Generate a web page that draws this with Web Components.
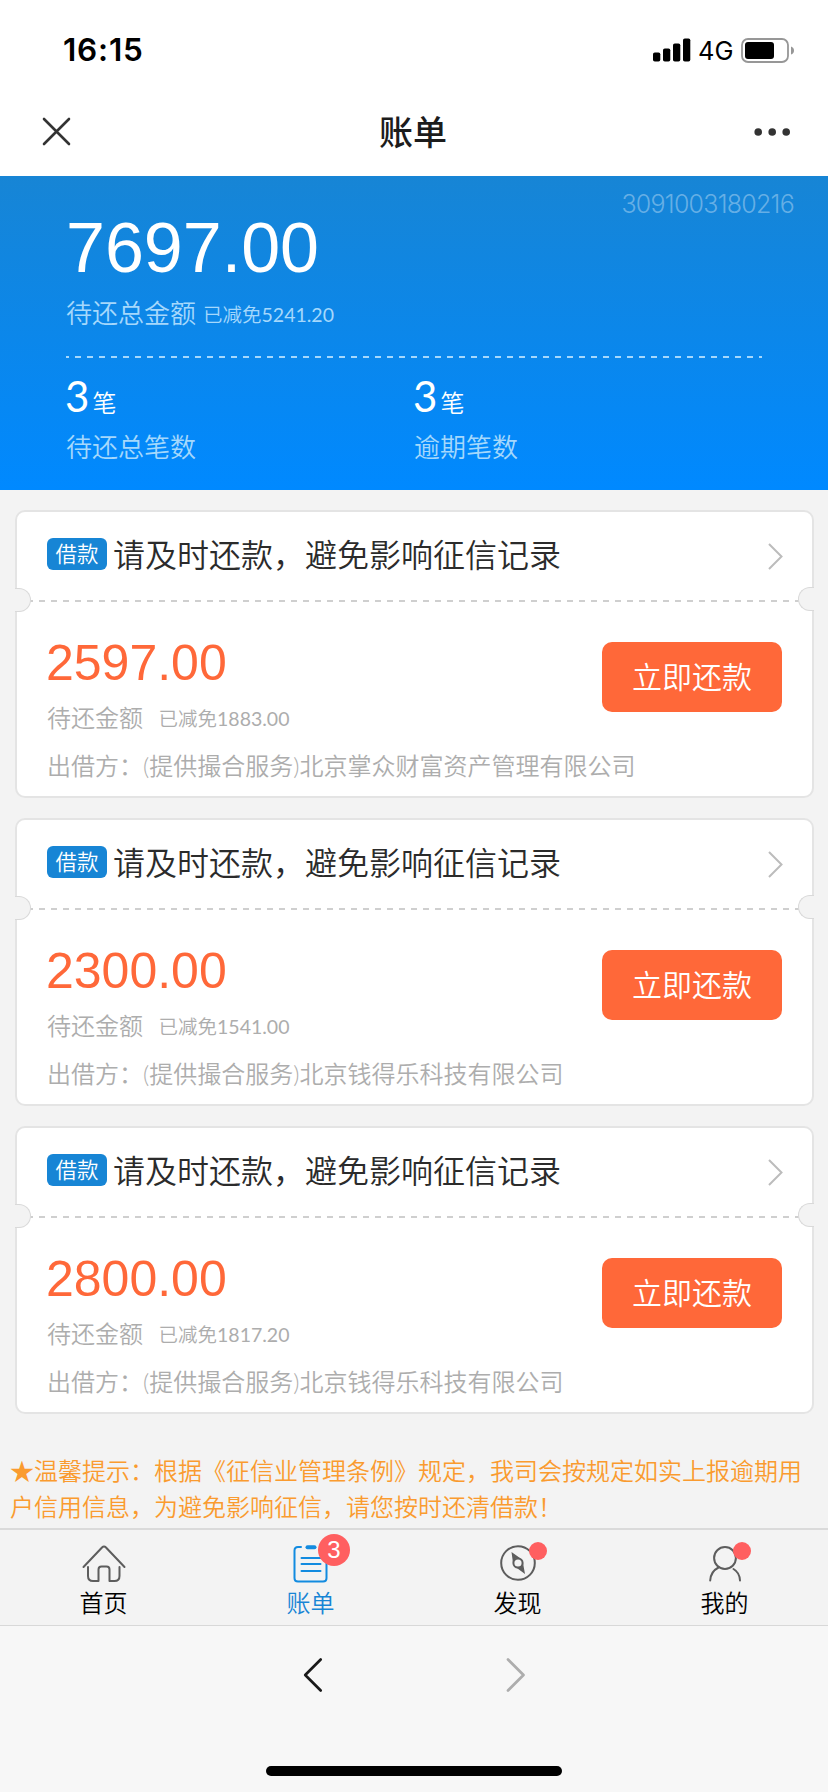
<!DOCTYPE html>
<html lang="zh-CN">
<head>
<meta charset="utf-8">
<title>账单</title>
<style>
html,body{margin:0;padding:0}
body{width:828px;height:1792px;overflow:hidden;background:#f3f3f3;font-family:Lato,"Noto Sans CJK SC",sans-serif;font-weight:350;-webkit-font-smoothing:antialiased}
</style>
</head>
<body>
<bill-app></bill-app>
<script>
const define=(name,html,setup)=>customElements.define(name,class extends HTMLElement{
  constructor(){super();this.attachShadow({mode:'open'}).innerHTML=html;}
  connectedCallback(){if(setup)setup(this,this.shadowRoot);}
});

define('status-bar',`<style>
:host{display:flex;box-sizing:border-box;height:88px;padding:0 33px 0 63px;justify-content:space-between;align-items:center;background:#fff;color:#000;font-family:Inter,sans-serif}
.time{font-size:31.500px;font-weight:600;line-height:40px;padding-top:12px;letter-spacing:.8px}
.right{display:flex;align-items:center;padding-top:12px;height:40px}
.net{font-size:25.500px;font-weight:400;line-height:40px;margin:0 6px 0 7px;width:37px;padding-top:1px}
svg{display:block}
</style>
<span class="time">16:15</span>
<div class="right">
<svg width="38" height="25" viewBox="0 0 38 25"><g fill="#000"><rect x="0" y="14.500" width="7.300" height="9" rx="1.800"/><rect x="10" y="10.500" width="7.300" height="13" rx="1.800"/><rect x="20" y="5.500" width="7.300" height="18" rx="1.800"/><rect x="30" y="0.500" width="7.300" height="23" rx="1.800"/></g></svg>
<span class="net">4G</span>
<svg width="54" height="25" viewBox="0 0 54 25"><rect x="1" y="1" width="46" height="23" rx="6" fill="none" stroke="#979797" stroke-width="1.800"/><rect x="4" y="4" width="29" height="17" rx="3" fill="#000"/><path d="M50 8.500Q53 9.500 53 12.500Q53 15.500 50 16.500Z" fill="#979797"/></svg>
</div>`);

define('title-bar',`<style>
:host{display:grid;grid-template-columns:1fr auto 1fr;align-items:center;height:88px;box-sizing:border-box;padding:0 37px 0 42px;background:#fff;color:#1c1c1c}
svg{display:block;margin-bottom:1px}
.more{justify-self:end}
h1{margin:0 0 0 -7px;font:500 34px/88px "Noto Sans CJK SC",sans-serif;height:88px;position:relative;top:-1px}
</style>
<svg width="29" height="29" viewBox="0 0 29 29"><path d="M2 2L27 27M27 2L2 27" stroke="#333" stroke-width="2.600" stroke-linecap="round"/></svg>
<h1><slot></slot></h1>
<svg class="more" width="37" height="10" viewBox="0 0 37 10"><g fill="#333"><circle cx="4.200" cy="5" r="3.800"/><circle cx="18.200" cy="5" r="3.800"/><circle cx="32.200" cy="5" r="3.800"/></g></svg>`);

define('bill-summary',`<style>
:host{display:block;box-sizing:border-box;height:314px;padding:14px 34px 0 66px;background:linear-gradient(#1785d5,#0089ff);color:#fff}
.serial{font:300 25px/28px Inter,sans-serif;color:rgba(255,255,255,.36);text-align:right;height:28px;margin-bottom:-12px;letter-spacing:-.75px}
.total{font:400 70px/80px "Liberation Sans",sans-serif;height:80px;padding-top:2px;margin-bottom:-2px}
.line{display:flex;height:36px;margin-top:9px;font-size:26px;line-height:36px;color:#a5d8fc;gap:7px}
.line small{font-size:19.500px;line-height:39px}
b{font-weight:400}
.rule{height:2px;margin:25px 0 0;width:696px;background:repeating-linear-gradient(90deg,#a5d8fc 0 6px,transparent 6px 12px) -3px 0/720px 2px}
.cols{display:grid;grid-template-columns:348px 1fr}
.n{display:flex;align-items:baseline;font-size:42px;line-height:52px;height:52px;padding-top:12px;gap:3px}
.n b{margin-left:-1px}
.n i{font:350 24px/30px "Noto Sans CJK SC",sans-serif}
.k{font-size:26px;line-height:36px;height:36px;margin-top:7px;color:#a5d8fc}
</style>
<div class="serial">3091003180216</div>
<div class="total">7697.00</div>
<div class="line"><span>待还总金额</span><small>已减免<b>5241.20</b></small></div>
<div class="rule"></div>
<div class="cols"><div><div class="n"><b>3</b><i>笔</i></div><div class="k">待还总笔数</div></div><div><div class="n"><b>3</b><i>笔</i></div><div class="k">逾期笔数</div></div></div>`);

define('pay-button',`<style>
:host{display:flex;width:180px;height:70px;box-sizing:border-box;padding-bottom:5px;border-radius:10px;background:#ff6839;color:#fff;align-items:center;justify-content:center;font:350 30px/64px "Noto Sans CJK SC",sans-serif}
</style><slot></slot>`);

define('loan-card',`<style>
:host{display:block;position:relative;box-sizing:border-box;width:799px;height:288px;border:2px solid #e4e4e4;border-radius:10px;background:#fff}
.head{display:flex;align-items:center;height:88px;box-sizing:border-box;padding:0 29px 0 30px}
.tag{width:60px;height:32px;border-radius:6px;background:#1785d5;color:#fff;font-size:21.500px;line-height:32px;text-align:center;margin-right:6px;margin-top:-4px}
.title{font-size:32px;line-height:44px;color:#2b2b2b;margin-top:-3px;flex:1}
.rule{height:2px;margin:0 12px;background:repeating-linear-gradient(90deg,#cfcfcf 0 6px,transparent 6px 12px) -2px 0/800px 2px}
.notch{position:absolute;box-sizing:border-box;width:16px;height:24px;background:#f3f3f3;border:1.500px solid #d9d9d9}
.l{left:-2px;top:76px;border-left:0;border-radius:0 12px 12px 0}
.r{right:-2px;top:75px;border-right:0;border-radius:12px 0 0 12px}
.body{display:flex;justify-content:space-between;padding:40px 30px 0}
.amt{font:400 50px/56px "Liberation Sans",sans-serif;color:#ff6839;margin:-7px 0 0 -1px}
.line{display:flex;gap:15.500px;color:#adadad;font-size:24px;line-height:36px;height:36px;margin-top:9px}
.line small{font-size:19.500px;line-height:38px}
b{font-weight:400}
.lender{color:#adadad;font-size:24px;line-height:36px;height:36px;padding:0 30px;margin-top:12px}
svg{display:block;margin-top:0}
</style>
<div class="head"><span class="tag">借款</span><span class="title">请及时还款，避免影响征信记录</span>
<svg width="15" height="27" viewBox="0 0 15 27"><path d="M1 1L13.500 13.500L1 26" fill="none" stroke="#bcbcbc" stroke-width="2"/></svg></div>
<div class="rule"></div><span class="notch l"></span><span class="notch r"></span>
<div class="body"><div><div class="amt"></div><div class="line"><span>待还金额</span><small>已减免<b></b></small></div></div><pay-button>立即还款</pay-button></div>
<div class="lender">出借方：<slot></slot></div>`,(el,r)=>{
  r.querySelector('.amt').textContent=el.getAttribute('amount');
  r.querySelector('b').textContent=el.getAttribute('waived');
});

define('tip-note',`<style>
:host{display:block;font-size:24px;line-height:36px;color:#fa9b2f;padding:0 10px;white-space:nowrap}
</style><slot></slot>`);

const icons={
home:`<path d="M2.500 24L21 4.500Q23 2.500 25 4.500L43.500 24" /><path d="M7 24V33Q7 38 12 38H17.500V26.500Q17.500 23.500 20.500 23.500H25.500Q28.500 23.500 28.500 26.500V38H33.500Q38.500 38 38.500 33V24"/>`,
bill:`<path d="M13 4H10Q6.500 4 6.500 7.500V35Q6.500 38.500 10 38.500H35Q38.500 38.500 38.500 35V7.500"/><path d="M13.500 15H32.500M13.500 21H32.500M13.500 28H32.500"/><path d="M19.500 4.300H26.500" stroke-width="4"/>`,
find:`<circle cx="23" cy="20" r="16.800"/><circle cx="23" cy="20" r="4.600"/><path fill="#5d5d5d" stroke="none" d="M16.500 9L26 15.800L23 15Q18.500 15.500 18 20ZM30 31L20.500 24L23.500 25Q28 24 28 20Z"/>`,
me:`<circle cx="23" cy="15" r="10.900"/><path d="M8.200 37.500Q8.700 28.500 16.500 24.500M31.500 26Q37.600 29.500 38 37.500"/>`};
define('tab-item',`<style>
:host{display:flex;flex:1;flex-direction:column;align-items:center;color:#000;font:350 24px/36px "Noto Sans CJK SC",sans-serif}
:host([active]){color:#1785d5}
.icon{position:relative;width:46px;height:42px;margin-top:13px}
svg{display:block;fill:none;stroke:#5d5d5d;stroke-width:2;stroke-linecap:round;stroke-linejoin:round}
:host([active]) svg{stroke:#128be0}
.badge{position:absolute;background:#ff5f60;color:#fff;border-radius:50%;text-align:center}
.dot{width:18px;height:18px;left:34.500px;top:-1px}
:host([icon="me"]) .dot{left:31px}
.num{width:32px;height:32px;left:30.500px;top:-9px;font:400 24px/32px "Liberation Sans",sans-serif}
.label{height:36px;margin-top:-1px}
</style><div class="icon"></div><div class="label"><slot></slot></div>`,(el,r)=>{
  const b=el.getAttribute('badge');
  r.querySelector('.icon').innerHTML='<svg width="46" height="42" viewBox="0 0 46 42">'+icons[el.getAttribute('icon')]+'</svg>'+(b===null?'':'<span class="badge '+(b?'num':'dot')+'">'+b+'</span>');
});
define('tab-bar',`<style>:host{display:flex;box-sizing:border-box;height:98px;border-top:2px solid #dadada;border-bottom:1px solid #d8d8d8;background:#f3f3f3}</style><slot></slot>`);

define('browser-bar',`<style>
:host{display:flex;flex-direction:column;align-items:center;height:166px;background:#f7f7f7}
.nav{display:flex;gap:182px;margin-top:31px}
svg{display:block}
.bar{width:296px;height:10px;border-radius:5px;background:#000;margin-top:73px}
</style>
<div class="nav"><svg width="20" height="36" viewBox="0 0 20 36"><path d="M17.700 2.500L2.200 18L17.700 33.500" fill="none" stroke="#1a1a1a" stroke-width="2.700" stroke-linecap="round" stroke-linejoin="round"/></svg>
<svg width="20" height="36" viewBox="0 0 20 36"><path d="M3 2.500L18.500 18L3 33.500" fill="none" stroke="#adadad" stroke-width="2.700" stroke-linecap="round" stroke-linejoin="round"/></svg></div>
<div class="bar"></div>`);

define('bill-app',`<style>
:host{display:flex;flex-direction:column;width:828px;height:1792px}
main{flex:1;display:flex;flex-direction:column;gap:20px;padding:20px 0 0 15px;min-height:0;box-sizing:border-box}
tip-note{margin:19px 0 0 -15px}
</style>
<status-bar></status-bar><title-bar>账单</title-bar><bill-summary></bill-summary>
<main>
<loan-card amount="2597.00" waived="1883.00">(提供撮合服务)北京掌众财富资产管理有限公司</loan-card>
<loan-card amount="2300.00" waived="1541.00">(提供撮合服务)北京钱得乐科技有限公司</loan-card>
<loan-card amount="2800.00" waived="1817.20">(提供撮合服务)北京钱得乐科技有限公司</loan-card>
<tip-note>★温馨提示：根据《征信业管理条例》规定，我司会按规定如实上报逾期用<br>户信用信息，为避免影响征信，请您按时还清借款！</tip-note>
</main>
<tab-bar><tab-item icon="home">首页</tab-item><tab-item icon="bill" active badge="3">账单</tab-item><tab-item icon="find" badge="">发现</tab-item><tab-item icon="me" badge="">我的</tab-item></tab-bar>
<browser-bar></browser-bar>`);
</script>
</body>
</html>
